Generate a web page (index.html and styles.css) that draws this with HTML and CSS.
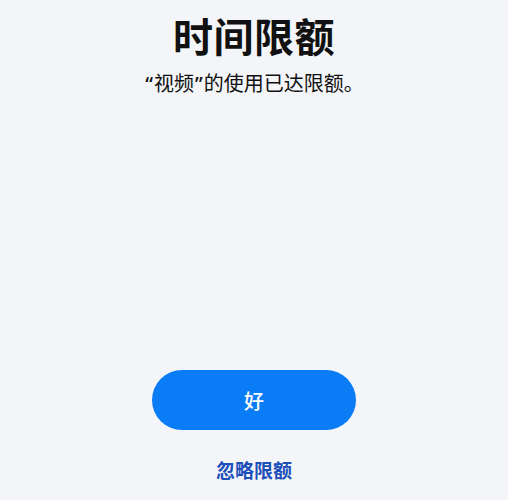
FILE: index.html
```html
<!DOCTYPE html>
<html lang="zh-CN">
    <head>
        <meta charset="UTF-8">
        <meta name="viewport" content="width=device-width, initial-scale=1.0">
        <title>时间限额</title>
        <link rel="stylesheet" href="styles.css">
    </head>
    <body>
        <div class="screen">
            <h1 class="title">时间限额</h1>
            <p class="subtitle"><span class="q">“</span>视频<span class="q">”</span>的使用已达限额。</p>

            <div class="actions">
                <button class="btn-ok" type="button">好</button>
                <a class="link-ignore" href="#">忽略限额</a>
            </div>
        </div>
    </body>
</html>
```

FILE: styles.css
```css
html, body {
    margin: 0;
    padding: 0;
}
body {
    background-color: #f3f5f8;
    font-family: "Noto Sans CJK SC", "Noto Sans", sans-serif;
    color: #111;
}
.screen {
    min-height: 100vh;
    box-sizing: border-box;
    display: flex;
    flex-direction: column;
    align-items: center;
    padding-top: 11px;
    padding-bottom: 18px;
}
.title {
    margin: 0;
    font-size: 40px;
    line-height: 48px;
    font-weight: 700;
    letter-spacing: 0.5px;
}
.subtitle {
    margin: 11px 0 0;
    font-size: 20px;
    line-height: 26px;
    font-weight: 400;
}
/* narrow quote marks instead of full-width CJK ones */
.q {
    font-family: "Noto Sans", sans-serif;
    font-weight: 500;
    margin: 0 1px;
}
.actions {
    margin-top: auto;
    display: flex;
    flex-direction: column;
    align-items: center;
}
.btn-ok {
    width: 204px;
    height: 60px;
    border: none;
    border-radius: 30px;
    background: #0a7cf6;
    color: white;
    font-family: inherit;
    font-size: 20px;
    font-weight: 500;
    cursor: pointer;
}
.link-ignore {
    margin-top: 28px;
    font-size: 19px;
    line-height: 24px;
    font-weight: 700;
    color: #1d4fb8;
    text-decoration: none;
}
```
